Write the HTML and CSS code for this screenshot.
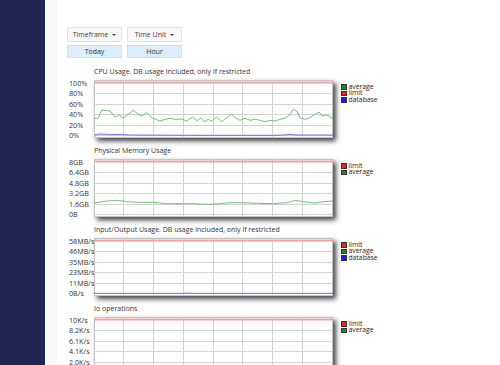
FILE: index.html
```html
<!DOCTYPE html>
<html lang="en">
<head>
<meta charset="utf-8">
<title>Usage</title>
<link rel="stylesheet" href="styles.css">
</head>
<body>
<svg class="defs" width="0" height="0" aria-hidden="true">
  <defs>
    <symbol id="grid" viewBox="0 0 239 58">
      <rect x="0.5" y="0.5" width="238" height="57" fill="#fff" stroke="#c4c4c4"/>
      <g stroke="#d2d2d2" stroke-width="1" shape-rendering="crispEdges">
        <line x1="29.5" y1="0" x2="29.5" y2="58"/>
        <line x1="59.5" y1="0" x2="59.5" y2="58"/>
        <line x1="89.5" y1="0" x2="89.5" y2="58"/>
        <line x1="119.5" y1="0" x2="119.5" y2="58"/>
        <line x1="148.5" y1="0" x2="148.5" y2="58"/>
        <line x1="178.5" y1="0" x2="178.5" y2="58"/>
        <line x1="208.5" y1="0" x2="208.5" y2="58"/>
        <line x1="0" y1="13.5" x2="239" y2="13.5"/>
        <line x1="0" y1="24.5" x2="239" y2="24.5"/>
        <line x1="0" y1="34.5" x2="239" y2="34.5"/>
        <line x1="0" y1="45.5" x2="239" y2="45.5"/>
        <line x1="0" y1="55.5" x2="239" y2="55.5"/>
      </g>
      <line x1="0" y1="2.5" x2="239" y2="2.5" stroke="#f2a0a0" stroke-width="2"/>
    </symbol>
  </defs>
</svg>
<div class="layout">
  <aside class="sidebar"></aside>
  <main class="main">
    <div class="controls">
      <div class="control">
        <button class="dropdown">Timeframe <span class="caret"></span></button>
        <div class="value">Today</div>
      </div>
      <div class="control">
        <button class="dropdown">Time Unit <span class="caret"></span></button>
        <div class="value">Hour</div>
      </div>
    </div>

    <section class="chart">
      <div class="chart-title">CPU Usage. DB usage included, only if restricted</div>
      <div class="chart-body">
        <div class="yaxis"><span>100%</span><span>80%</span><span>60%</span><span>40%</span><span>20%</span><span>0%</span></div>
        <svg class="plot" viewBox="0 0 239 58">
          <use href="#grid"/>
          <polyline class="l-avg" points="0,38.3 4,38.3 7.7,30 11,30.3 16,31 21,37 25.3,35 29.3,38.3 33.3,35 39.3,30.3 44.3,34.3 47.7,36 52.7,32.7 58.7,38.3 61,39 66,41 71,39.3 76,38.3 81,39.3 87.7,39 92.7,41 98.7,37 103.3,41 106.7,37.7 110,41.7 114.3,39.3 117.7,41 122.7,37 127.7,41.7 132.7,37.7 137.7,34.3 141,37.7 146,40.3 151,38.3 156,40.3 161,39.3 166,40.3 171,41.7 176,40.3 181,41 186,39.3 191,38.3 196,34.3 199.3,29.3 202.7,31 206,37.7 211,39.3 216,37.7 221,34.3 225.3,32 227.7,36 232.7,35 237.7,37.7 239,38.5"/>
          <polyline class="l-db" points="0,55 5,54 10,54.2 20,54.5 40,55 100,55.3 180,55.3 190,55 196,54.3 202,55 239,55"/>
        </svg>
        <ul class="legend">
          <li><i class="sw sw-green"></i>average</li>
          <li><i class="sw sw-red"></i>limit</li>
          <li><i class="sw sw-blue"></i>database</li>
        </ul>
      </div>
    </section>

    <section class="chart">
      <div class="chart-title">Physical Memory Usage</div>
      <div class="chart-body">
        <div class="yaxis"><span>8GB</span><span>6.4GB</span><span>4.8GB</span><span>3.2GB</span><span>1.6GB</span><span>0B</span></div>
        <svg class="plot" viewBox="0 0 239 58">
          <use href="#grid"/>
          <polyline class="l-avg" points="0,44 12.7,42 22.7,41.3 32.7,42.7 46,43.3 59.3,43.3 72.7,44.7 86,44.7 99.3,44.7 112.7,45.3 126,44.7 136,43.7 149.3,43.7 162.7,44.3 179.3,44.7 192.7,43.7 201,41.3 209.3,42.7 221,44 229.3,42.7 237.7,42 239,42"/>
        </svg>
        <ul class="legend">
          <li><i class="sw sw-red"></i>limit</li>
          <li><i class="sw sw-green"></i>average</li>
        </ul>
      </div>
    </section>

    <section class="chart">
      <div class="chart-title">Input/Output Usage. DB usage included, only if restricted</div>
      <div class="chart-body">
        <div class="yaxis"><span>58MB/s</span><span>46MB/s</span><span>35MB/s</span><span>23MB/s</span><span>11MB/s</span><span>0B/s</span></div>
        <svg class="plot" viewBox="0 0 239 58">
          <use href="#grid"/>
          <polyline class="l-db" points="0,55.3 90,55.3 95,55 100,55.3 239,55.3"/>
        </svg>
        <ul class="legend">
          <li><i class="sw sw-red"></i>limit</li>
          <li><i class="sw sw-green"></i>average</li>
          <li><i class="sw sw-blue"></i>database</li>
        </ul>
      </div>
    </section>

    <section class="chart">
      <div class="chart-title">Io operations</div>
      <div class="chart-body">
        <div class="yaxis"><span>10K/s</span><span>8.2K/s</span><span>6.1K/s</span><span>4.1K/s</span><span>2.0K/s</span></div>
        <svg class="plot" viewBox="0 0 239 58">
          <use href="#grid"/>
        </svg>
        <ul class="legend">
          <li><i class="sw sw-red"></i>limit</li>
          <li><i class="sw sw-green"></i>average</li>
        </ul>
      </div>
    </section>
  </main>
</div>
</body>
</html>
```

FILE: styles.css
```css
* { box-sizing: border-box; }

html, body {
  margin: 0;
  height: 365px;
  overflow: hidden;
  background: #fff;
  font-family: "Open Sans", "Noto Sans", sans-serif;
  color: #333;
}

.defs { position: absolute; width: 0; height: 0; }

.layout {
  display: flex;
  min-height: 365px;
}

.sidebar {
  flex: none;
  width: 45px;
  background: #1e2552;
}

.main {
  flex: 1;
  border-left: 12px solid #f7f7f8;
  padding: 27px 0 0 10px;
}

.controls {
  display: flex;
  gap: 5px;
}

.control {
  display: flex;
  flex-direction: column;
  gap: 3px;
  width: 55px;
}

.dropdown {
  height: 15px;
  margin: 0;
  padding: 0;
  border: 1px solid #e2e2e2;
  border-radius: 1px;
  background: #f8f8f8;
  font-family: inherit;
  font-size: 7px;
  color: #444;
  display: flex;
  align-items: center;
  justify-content: center;
  gap: 4px;
}

.caret {
  width: 0;
  height: 0;
  border-left: 2px solid transparent;
  border-right: 2px solid transparent;
  border-top: 2px solid #444;
}

.value {
  height: 13px;
  border: 1px solid #cfe0ee;
  background: #dcedfb;
  font-size: 7px;
  line-height: 11px;
  text-align: center;
  color: #333;
}

.chart {
  margin-top: 8.5px;
}

.chart:first-of-type {
  margin-top: 9px;
}

.chart-title {
  margin-left: 27px;
  margin-bottom: 2.5px;
  font-size: 7px;
  line-height: 10px;
  color: #333;
  white-space: nowrap;
}

.chart-body {
  display: flex;
  align-items: flex-start;
  height: 58px;
}

.yaxis {
  flex: none;
  width: 27px;
  padding-left: 2px;
  margin-top: -1.75px;
  display: flex;
  flex-direction: column;
  font-size: 7.2px;
  line-height: 10.5px;
  color: #333;
  white-space: nowrap;
}

.plot {
  flex: none;
  display: block;
  width: 239px;
  height: 58px;
  background: #fff;
  box-shadow: 3px 3px 5px rgba(0, 0, 0, 0.75);
}

.l-avg {
  fill: none;
  stroke: #66b866;
  stroke-width: 0.9;
}

.l-db {
  fill: none;
  stroke: #6464ee;
  stroke-width: 0.9;
}

.legend {
  list-style: none;
  margin: 4px 0 0 8px;
  padding: 0;
  font-size: 6.8px;
  line-height: 6.5px;
  color: #222;
}

.legend li {
  display: flex;
  align-items: center;
  gap: 2px;
  height: 6.5px;
}

.sw {
  display: block;
  width: 5.5px;
  height: 5.5px;
  border: 1px solid #333;
}

.sw-green { background: #1e8c1e; }
.sw-red { background: #ee2020; }
.sw-blue { background: #1a1aee; }
```
